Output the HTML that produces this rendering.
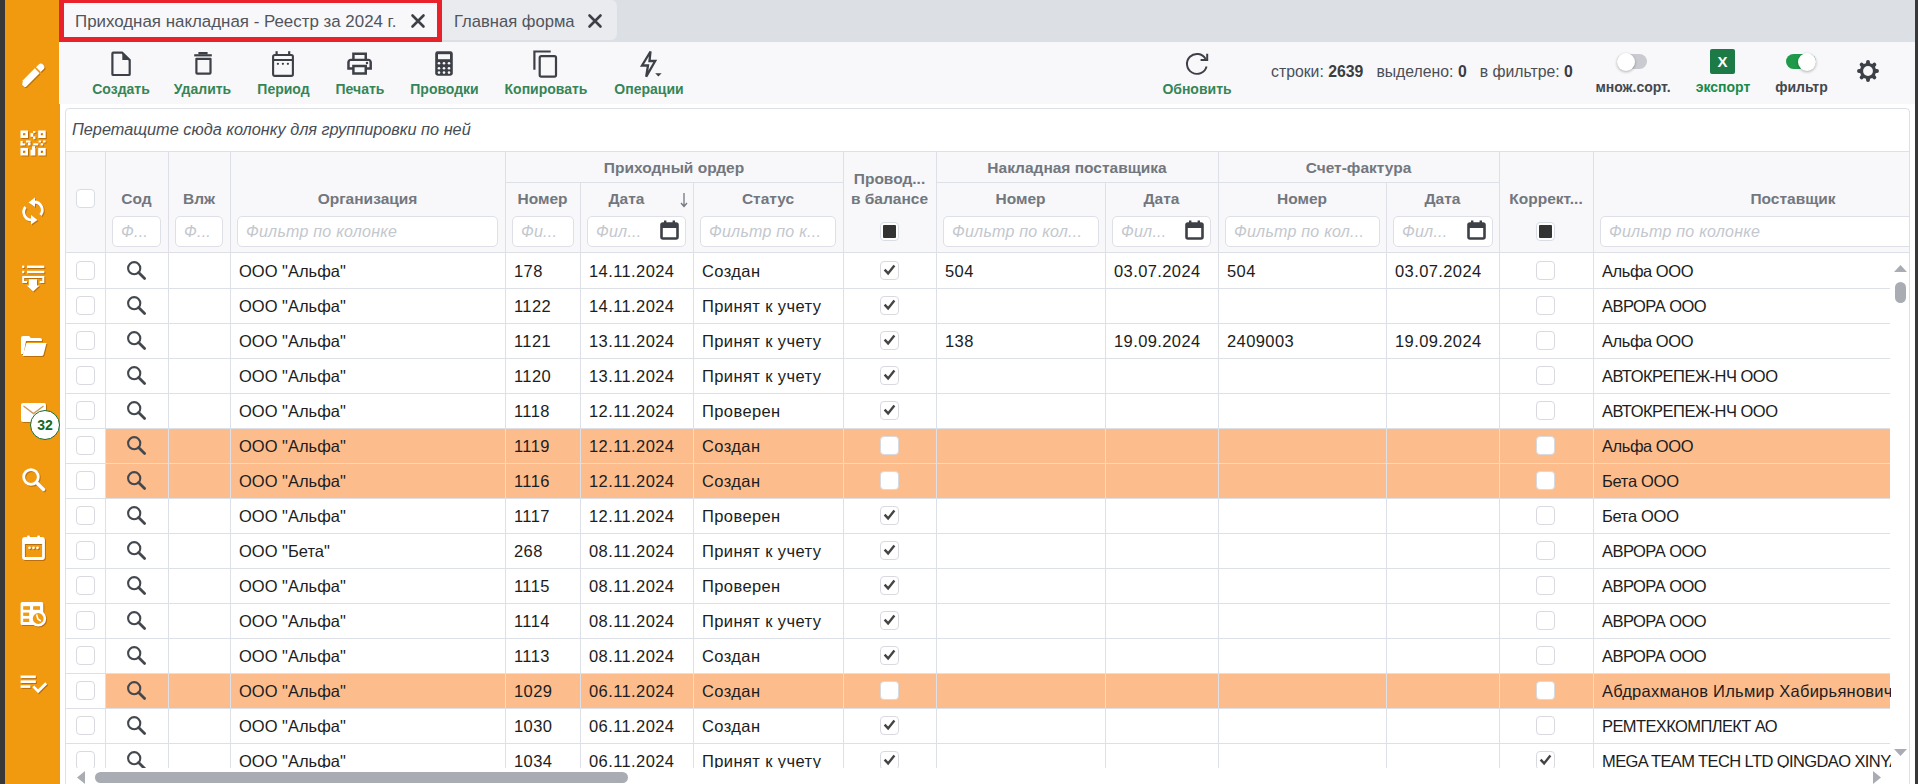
<!DOCTYPE html><html><head><meta charset="utf-8"><style>
html,body{margin:0;padding:0;width:1918px;height:784px;overflow:hidden;background:#fff;font-family:"Liberation Sans", sans-serif;}
div{box-sizing:border-box;}
.ic{position:absolute;overflow:visible;}
</style></head><body>
<div style="position:absolute;left:5px;top:0px;width:55px;height:784px;background:#f19a0f"></div>
<div style="position:absolute;left:59px;top:0px;width:1856px;height:42px;background:#dcdfe4"></div>
<div style="position:absolute;left:59px;top:42px;width:1856px;height:62px;background:#f8f8fa"></div>
<div style="position:absolute;left:59px;top:-2px;width:383px;height:44px;background:#f8f8fa;border:5px solid #e8212b"></div>
<div style="position:absolute;left:75px;top:1px;text-align:left;white-space:nowrap;font-size:16.9px;line-height:41px;color:#50555d">Приходная накладная - Реестр за 2024 г.</div>
<svg class="ic" style="left:410.5px;top:14px" width="14" height="14" viewBox="0 0 14 14"><path d="M1.5 1.5L12.5 12.5M12.5 1.5L1.5 12.5" stroke="#3d4047" stroke-width="2.6" stroke-linecap="round"/></svg>
<div style="position:absolute;left:442px;top:0px;width:175px;height:40px;background:#e9ebef;border-radius:0 6px 6px 0"></div>
<div style="position:absolute;left:454px;top:1px;text-align:left;white-space:nowrap;font-size:16.6px;line-height:41px;color:#50555d">Главная форма</div>
<svg class="ic" style="left:588px;top:14px" width="14" height="14" viewBox="0 0 14 14"><path d="M1.5 1.5L12.5 12.5M12.5 1.5L1.5 12.5" stroke="#3d4047" stroke-width="2.6" stroke-linecap="round"/></svg>
<svg class="ic" style="left:109px;top:50px" width="24" height="28" viewBox="0 0 24 28"><path d="M13.3 2.7H4.2Q3.4 2.7 3.4 3.7V24.2Q3.4 25 4.2 25H19.9Q20.7 25 20.7 24.2V10.1Z" fill="none" stroke="#3d4047" stroke-width="2.2" stroke-linejoin="round"/><path d="M13.3 2.2V10.1H21.2Z" fill="#3d4047"/></svg>
<div style="position:absolute;left:61px;top:79px;width:120px;text-align:center;white-space:nowrap;font-size:14px;font-weight:bold;line-height:20px;color:#358557">Создать</div>
<svg class="ic" style="left:192px;top:50px" width="22" height="28" viewBox="0 0 22 28"><path d="M2.2 5.3H19.8" stroke="#3d4047" stroke-width="2.2"/><path d="M7.2 4.3V2.9H14.8V4.3" fill="#3d4047" stroke="#3d4047" stroke-width="1.6"/><path d="M4.4 8.8V22.8Q4.4 23.7 5.3 23.7H17.6Q18.5 23.7 18.5 22.8V8.8Z" fill="none" stroke="#3d4047" stroke-width="2.2" stroke-linejoin="round"/></svg>
<div style="position:absolute;left:142.5px;top:79px;width:120px;text-align:center;white-space:nowrap;font-size:14px;font-weight:bold;line-height:20px;color:#358557">Удалить</div>
<svg class="ic" style="left:270px;top:50px" width="26" height="28" viewBox="0 0 26 28"><rect x="3.1" y="5" width="19.8" height="20.9" rx="1.6" fill="none" stroke="#3d4047" stroke-width="2.1"/><path d="M3.1 10H22.9" stroke="#3d4047" stroke-width="2"/><rect x="5.5" y="1.2" width="2.2" height="4" fill="#3d4047"/><rect x="18.1" y="1.2" width="2.2" height="4" fill="#3d4047"/><circle cx="7.9" cy="13.8" r="1.15" fill="#3d4047"/><circle cx="12.9" cy="13.8" r="1.15" fill="#3d4047"/><circle cx="17.9" cy="13.8" r="1.15" fill="#3d4047"/></svg>
<div style="position:absolute;left:223.5px;top:79px;width:120px;text-align:center;white-space:nowrap;font-size:14px;font-weight:bold;line-height:20px;color:#358557">Период</div>
<svg class="ic" style="left:346.3px;top:50.4px" width="28.4" height="28.4" viewBox="1 1 23 23"><path d="M19 8h-1V3H6v5H5c-1.66 0-3 1.34-3 3v6h4v4h12v-4h4v-6c0-1.66-1.34-3-3-3zM8 5h8v3H8V5zm8 12v2H8v-4h8v2zm2-2v-2H6v2H4v-4c0-.55.45-1 1-1h14c.55 0 1 .45 1 1v4h-2z" fill="#3d4047"/><circle cx="18" cy="11.5" r="1" fill="#3d4047"/></svg>
<div style="position:absolute;left:300px;top:79px;width:120px;text-align:center;white-space:nowrap;font-size:14px;font-weight:bold;line-height:20px;color:#358557">Печать</div>
<svg class="ic" style="left:434px;top:50px" width="20" height="27" viewBox="0 0 20 27"><rect x="1.2" y="1.3" width="17.6" height="24.4" rx="2.4" fill="#3d4047"/><rect x="4" y="4.2" width="12" height="5" fill="#f8f8fa"/><g fill="#f8f8fa"><circle cx="5" cy="13.2" r="1.3"/><circle cx="10" cy="13.2" r="1.3"/><circle cx="15" cy="13.2" r="1.3"/><circle cx="5" cy="18.2" r="1.3"/><circle cx="10" cy="18.2" r="1.3"/><circle cx="15" cy="18.2" r="1.3"/><circle cx="5" cy="22.6" r="1.3"/><circle cx="10" cy="22.6" r="1.3"/><circle cx="15" cy="22.6" r="1.3"/></g></svg>
<div style="position:absolute;left:384.5px;top:79px;width:120px;text-align:center;white-space:nowrap;font-size:14px;font-weight:bold;line-height:20px;color:#358557">Проводки</div>
<svg class="ic" style="left:532px;top:49px" width="28" height="30" viewBox="0 0 28 30"><path d="M2.4 20.8V2.5H18.7" fill="none" stroke="#3d4047" stroke-width="2.2"/><rect x="7.7" y="7.1" width="16.3" height="20.5" rx="1.6" fill="none" stroke="#3d4047" stroke-width="2.2"/></svg>
<div style="position:absolute;left:486px;top:79px;width:120px;text-align:center;white-space:nowrap;font-size:14px;font-weight:bold;line-height:20px;color:#358557">Копировать</div>
<svg class="ic" style="left:638px;top:49px" width="26" height="30" viewBox="0 0 26 30"><path d="M12.5 2.5L4 16.5H10L8.2 27.6L17.2 12H11.5Z" fill="none" stroke="#3d4047" stroke-width="2.3" stroke-linejoin="miter"/><path d="M17.2 24.2H23.6L20.4 27.4Z" fill="#3d4047"/></svg>
<div style="position:absolute;left:589px;top:79px;width:120px;text-align:center;white-space:nowrap;font-size:14px;font-weight:bold;line-height:20px;color:#358557">Операции</div>
<svg class="ic" style="left:1180px;top:48px" width="32" height="32" viewBox="0 0 32 32"><path d="M26.56 18.39A9.95 9.95 0 1 1 25.6 11.0" fill="none" stroke="#3d4047" stroke-width="1.95"/><path d="M27.2 5.8V12.1H20.6" fill="none" stroke="#3d4047" stroke-width="2"/></svg>
<div style="position:absolute;left:1137px;top:79px;width:120px;text-align:center;white-space:nowrap;font-size:14px;font-weight:bold;line-height:20px;color:#358557">Обновить</div>
<div style="position:absolute;left:1271px;top:62px;white-space:nowrap;font-size:15.8px;line-height:20px;color:#4a4f57">строки: <b style="color:#3a3d42">2639</b><span style="display:inline-block;width:13px"></span>выделено: <b style="color:#3a3d42">0</b><span style="display:inline-block;width:13px"></span>в фильтре: <b style="color:#3a3d42">0</b></div>
<div style="position:absolute;left:1617px;top:54px;width:30px;height:15px;background:#c9cbd0;border-radius:8px"></div>
<div style="position:absolute;left:1617px;top:53px;width:18px;height:18px;background:#fff;border-radius:50%;box-shadow:0 1px 3px rgba(0,0,0,0.3)"></div>
<div style="position:absolute;left:1573px;top:77px;width:120px;text-align:center;white-space:nowrap;font-size:14px;font-weight:bold;line-height:20px;color:#43484f">множ.сорт.</div>
<div style="position:absolute;left:1710px;top:49px;width:25px;height:25px;background:#1b7a45;border-radius:2px"></div>
<div style="position:absolute;left:1710px;top:49px;width:25px;text-align:center;white-space:nowrap;font-size:15px;font-weight:bold;line-height:25px;color:#fff">X</div>
<div style="position:absolute;left:1663px;top:77px;width:120px;text-align:center;white-space:nowrap;font-size:14px;font-weight:bold;line-height:20px;color:#1a8a4a">экспорт</div>
<div style="position:absolute;left:1786px;top:54px;width:30px;height:15px;background:#1f9a4b;border-radius:8px"></div>
<div style="position:absolute;left:1798px;top:53px;width:18px;height:18px;background:#fff;border-radius:50%;box-shadow:0 1px 3px rgba(0,0,0,0.3)"></div>
<div style="position:absolute;left:1741.5px;top:77px;width:120px;text-align:center;white-space:nowrap;font-size:14px;font-weight:bold;line-height:20px;color:#43484f">фильтр</div>
<svg class="ic" style="left:1853.9px;top:56.8px" width="28" height="28" viewBox="0 0 28 28"><path d="M14 14L23.00 14.00M14 14L20.36 20.36M14 14L14.00 23.00M14 14L7.64 20.36M14 14L5.00 14.00M14 14L7.64 7.64M14 14L14.00 5.00M14 14L20.36 7.64" stroke="#3d4047" stroke-width="3.9" stroke-linecap="round"/><circle cx="14" cy="14" r="8.1" fill="#3d4047"/><circle cx="14" cy="14" r="4.9" fill="#f8f8fa"/></svg>
<div style="position:absolute;left:65px;top:108px;width:1845px;height:686px;border:1px solid #dde0e6;border-radius:4px;background:#fff"></div>
<div style="position:absolute;left:72px;top:113px;text-align:left;white-space:nowrap;font-size:16.3px;font-style:italic;line-height:32px;color:#484d56">Перетащите сюда колонку для группировки по ней</div>
<div style="position:absolute;left:66px;top:151px;width:1843px;height:101px;#f8f8fa;background:#f8f8fa"></div>
<div style="position:absolute;left:65px;top:151px;width:1845px;height:1px;background:#dde0e6"></div>
<div style="position:absolute;left:65px;top:252px;width:1845px;height:1px;background:#dde0e6"></div>
<div style="position:absolute;left:105px;top:151px;width:1px;height:101px;background:#dde0e6"></div>
<div style="position:absolute;left:168px;top:151px;width:1px;height:101px;background:#dde0e6"></div>
<div style="position:absolute;left:230px;top:151px;width:1px;height:101px;background:#dde0e6"></div>
<div style="position:absolute;left:505px;top:151px;width:1px;height:101px;background:#dde0e6"></div>
<div style="position:absolute;left:843px;top:151px;width:1px;height:101px;background:#dde0e6"></div>
<div style="position:absolute;left:936px;top:151px;width:1px;height:101px;background:#dde0e6"></div>
<div style="position:absolute;left:1218px;top:151px;width:1px;height:101px;background:#dde0e6"></div>
<div style="position:absolute;left:1499px;top:151px;width:1px;height:101px;background:#dde0e6"></div>
<div style="position:absolute;left:1593px;top:151px;width:1px;height:101px;background:#dde0e6"></div>
<div style="position:absolute;left:580px;top:182px;width:1px;height:70px;background:#dde0e6"></div>
<div style="position:absolute;left:693px;top:182px;width:1px;height:70px;background:#dde0e6"></div>
<div style="position:absolute;left:1105px;top:182px;width:1px;height:70px;background:#dde0e6"></div>
<div style="position:absolute;left:1386px;top:182px;width:1px;height:70px;background:#dde0e6"></div>
<div style="position:absolute;left:505px;top:182px;width:338px;height:1px;background:#dde0e6"></div>
<div style="position:absolute;left:936px;top:182px;width:563px;height:1px;background:#dde0e6"></div>
<div style="position:absolute;left:505px;top:158px;width:338px;text-align:center;white-space:nowrap;font-size:15.5px;font-weight:bold;line-height:20px;color:#72777e">Приходный ордер</div>
<div style="position:absolute;left:936px;top:158px;width:282px;text-align:center;white-space:nowrap;font-size:15.5px;font-weight:bold;line-height:20px;color:#72777e">Накладная поставщика</div>
<div style="position:absolute;left:1218px;top:158px;width:281px;text-align:center;white-space:nowrap;font-size:15.5px;font-weight:bold;line-height:20px;color:#72777e">Счет-фактура</div>
<div style="position:absolute;left:105px;top:189px;width:63px;text-align:center;white-space:nowrap;font-size:15.5px;font-weight:bold;line-height:20px;color:#72777e">Сод</div>
<div style="position:absolute;left:168px;top:189px;width:62px;text-align:center;white-space:nowrap;font-size:15.5px;font-weight:bold;line-height:20px;color:#72777e">Влж</div>
<div style="position:absolute;left:230px;top:189px;width:275px;text-align:center;white-space:nowrap;font-size:15.5px;font-weight:bold;line-height:20px;color:#72777e">Организация</div>
<div style="position:absolute;left:505px;top:189px;width:75px;text-align:center;white-space:nowrap;font-size:15.5px;font-weight:bold;line-height:20px;color:#72777e">Номер</div>
<div style="position:absolute;left:580px;top:189px;width:93px;text-align:center;white-space:nowrap;font-size:15.5px;font-weight:bold;line-height:20px;color:#72777e">Дата</div>
<div style="position:absolute;left:693px;top:189px;width:150px;text-align:center;white-space:nowrap;font-size:15.5px;font-weight:bold;line-height:20px;color:#72777e">Статус</div>
<div style="position:absolute;left:936px;top:189px;width:169px;text-align:center;white-space:nowrap;font-size:15.5px;font-weight:bold;line-height:20px;color:#72777e">Номер</div>
<div style="position:absolute;left:1105px;top:189px;width:113px;text-align:center;white-space:nowrap;font-size:15.5px;font-weight:bold;line-height:20px;color:#72777e">Дата</div>
<div style="position:absolute;left:1218px;top:189px;width:168px;text-align:center;white-space:nowrap;font-size:15.5px;font-weight:bold;line-height:20px;color:#72777e">Номер</div>
<div style="position:absolute;left:1386px;top:189px;width:113px;text-align:center;white-space:nowrap;font-size:15.5px;font-weight:bold;line-height:20px;color:#72777e">Дата</div>
<div style="position:absolute;left:1499px;top:189px;width:94px;text-align:center;white-space:nowrap;font-size:15.5px;font-weight:bold;line-height:20px;color:#72777e">Коррект...</div>
<div style="position:absolute;left:1593px;top:189px;width:400px;text-align:center;white-space:nowrap;font-size:15.5px;font-weight:bold;line-height:20px;color:#72777e">Поставщик</div>
<div style="position:absolute;left:843px;top:169px;width:93px;text-align:center;white-space:nowrap;font-size:15.5px;font-weight:bold;line-height:20px;color:#72777e">Провод...</div>
<div style="position:absolute;left:843px;top:189px;width:93px;text-align:center;white-space:nowrap;font-size:15.5px;font-weight:bold;line-height:20px;color:#72777e">в балансе</div>
<svg class="ic" style="left:679px;top:192px" width="10" height="16" viewBox="0 0 10 16"><path d="M5 1V14M2 11L5 14.5L8 11" fill="none" stroke="#72777e" stroke-width="1.3"/></svg>
<div style="position:absolute;left:76px;top:189px;width:19px;height:19px;background:#fff;border:1px solid #d9dce2;border-radius:4px"></div>
<div style="position:absolute;left:112px;top:216px;width:49px;height:31px;background:#fff;border:1px solid #dde0e6;border-radius:5px"></div>
<div style="position:absolute;left:121px;top:216px;text-align:left;white-space:nowrap;font-size:16px;font-style:italic;line-height:31px;color:#c3c7ce;letter-spacing:0.25px">Ф...</div>
<div style="position:absolute;left:175px;top:216px;width:48px;height:31px;background:#fff;border:1px solid #dde0e6;border-radius:5px"></div>
<div style="position:absolute;left:184px;top:216px;text-align:left;white-space:nowrap;font-size:16px;font-style:italic;line-height:31px;color:#c3c7ce;letter-spacing:0.25px">Ф...</div>
<div style="position:absolute;left:237px;top:216px;width:261px;height:31px;background:#fff;border:1px solid #dde0e6;border-radius:5px"></div>
<div style="position:absolute;left:246px;top:216px;text-align:left;white-space:nowrap;font-size:16px;font-style:italic;line-height:31px;color:#c3c7ce;letter-spacing:0.25px">Фильтр по колонке</div>
<div style="position:absolute;left:512px;top:216px;width:62px;height:31px;background:#fff;border:1px solid #dde0e6;border-radius:5px"></div>
<div style="position:absolute;left:521px;top:216px;text-align:left;white-space:nowrap;font-size:16px;font-style:italic;line-height:31px;color:#c3c7ce;letter-spacing:0.25px">Фи...</div>
<div style="position:absolute;left:587px;top:216px;width:99px;height:31px;background:#fff;border:1px solid #dde0e6;border-radius:5px"></div>
<div style="position:absolute;left:596px;top:216px;text-align:left;white-space:nowrap;font-size:16px;font-style:italic;line-height:31px;color:#c3c7ce;letter-spacing:0.25px">Фил...</div>
<svg class="ic" style="left:660px;top:220px" width="19" height="20" viewBox="0 0 19 20"><rect x="1.5" y="3.5" width="16" height="15" rx="1.5" fill="none" stroke="#3d4047" stroke-width="2.6"/><rect x="1" y="3" width="17" height="5" fill="#3d4047"/><rect x="4" y="0.5" width="2.4" height="4" fill="#3d4047"/><rect x="12.6" y="0.5" width="2.4" height="4" fill="#3d4047"/></svg>
<div style="position:absolute;left:700px;top:216px;width:136px;height:31px;background:#fff;border:1px solid #dde0e6;border-radius:5px"></div>
<div style="position:absolute;left:709px;top:216px;text-align:left;white-space:nowrap;font-size:16px;font-style:italic;line-height:31px;color:#c3c7ce;letter-spacing:0.25px">Фильтр по к...</div>
<div style="position:absolute;left:943px;top:216px;width:156px;height:31px;background:#fff;border:1px solid #dde0e6;border-radius:5px"></div>
<div style="position:absolute;left:952px;top:216px;text-align:left;white-space:nowrap;font-size:16px;font-style:italic;line-height:31px;color:#c3c7ce;letter-spacing:0.25px">Фильтр по кол...</div>
<div style="position:absolute;left:1112px;top:216px;width:99px;height:31px;background:#fff;border:1px solid #dde0e6;border-radius:5px"></div>
<div style="position:absolute;left:1121px;top:216px;text-align:left;white-space:nowrap;font-size:16px;font-style:italic;line-height:31px;color:#c3c7ce;letter-spacing:0.25px">Фил...</div>
<svg class="ic" style="left:1185px;top:220px" width="19" height="20" viewBox="0 0 19 20"><rect x="1.5" y="3.5" width="16" height="15" rx="1.5" fill="none" stroke="#3d4047" stroke-width="2.6"/><rect x="1" y="3" width="17" height="5" fill="#3d4047"/><rect x="4" y="0.5" width="2.4" height="4" fill="#3d4047"/><rect x="12.6" y="0.5" width="2.4" height="4" fill="#3d4047"/></svg>
<div style="position:absolute;left:1225px;top:216px;width:155px;height:31px;background:#fff;border:1px solid #dde0e6;border-radius:5px"></div>
<div style="position:absolute;left:1234px;top:216px;text-align:left;white-space:nowrap;font-size:16px;font-style:italic;line-height:31px;color:#c3c7ce;letter-spacing:0.25px">Фильтр по кол...</div>
<div style="position:absolute;left:1393px;top:216px;width:100px;height:31px;background:#fff;border:1px solid #dde0e6;border-radius:5px"></div>
<div style="position:absolute;left:1402px;top:216px;text-align:left;white-space:nowrap;font-size:16px;font-style:italic;line-height:31px;color:#c3c7ce;letter-spacing:0.25px">Фил...</div>
<svg class="ic" style="left:1467px;top:220px" width="19" height="20" viewBox="0 0 19 20"><rect x="1.5" y="3.5" width="16" height="15" rx="1.5" fill="none" stroke="#3d4047" stroke-width="2.6"/><rect x="1" y="3" width="17" height="5" fill="#3d4047"/><rect x="4" y="0.5" width="2.4" height="4" fill="#3d4047"/><rect x="12.6" y="0.5" width="2.4" height="4" fill="#3d4047"/></svg>
<div style="position:absolute;left:1600px;top:216px;width:360px;height:31px;background:#fff;border:1px solid #dde0e6;border-radius:5px"></div>
<div style="position:absolute;left:1609px;top:216px;text-align:left;white-space:nowrap;font-size:16px;font-style:italic;line-height:31px;color:#c3c7ce;letter-spacing:0.25px">Фильтр по колонке</div>
<div style="position:absolute;left:880.0px;top:222px;width:19px;height:19px;background:#fff;border:1px solid #d9dce2;border-radius:4px"></div>
<div style="position:absolute;left:883.0px;top:225px;width:13px;height:13px;background:#333;border-radius:1px"></div>
<div style="position:absolute;left:1536.0px;top:222px;width:19px;height:19px;background:#fff;border:1px solid #d9dce2;border-radius:4px"></div>
<div style="position:absolute;left:1539.0px;top:225px;width:13px;height:13px;background:#333;border-radius:1px"></div>
<div style="position:absolute;left:1910px;top:108px;width:5px;height:676px;background:#fff"></div>
<div style="position:absolute;left:1909px;top:111px;width:1px;height:676px;background:#dde0e6"></div>
<div style="position:absolute;left:66px;top:253px;width:1825px;height:515px;overflow:hidden">
<div style="position:absolute;left:0px;top:35px;width:1824px;height:1px;background:#dde0e6"></div>
<div style="position:absolute;left:10px;top:8px;width:19px;height:19px;background:#fff;border:1px solid #d8dadf;border-radius:4px"></div>
<svg class="ic" style="left:60px;top:7px" width="22" height="22" viewBox="0 0 22 22"><circle cx="8.2" cy="8.2" r="6.1" fill="none" stroke="#43474e" stroke-width="2.1"/><path d="M12.6 12.6L18.6 18.6" stroke="#43474e" stroke-width="2.8" stroke-linecap="round"/></svg>
<div style="position:absolute;left:173px;top:1px;text-align:left;white-space:nowrap;font-size:16.5px;line-height:35px;color:#1b1d21;letter-spacing:0px">ООО "Альфа"</div>
<div style="position:absolute;left:448px;top:1px;text-align:left;white-space:nowrap;font-size:16.5px;line-height:35px;color:#1b1d21;letter-spacing:0.4px">178</div>
<div style="position:absolute;left:523px;top:1px;text-align:left;white-space:nowrap;font-size:16.5px;line-height:35px;color:#1b1d21;letter-spacing:0.4px">14.11.2024</div>
<div style="position:absolute;left:636px;top:1px;text-align:left;white-space:nowrap;font-size:16.5px;line-height:35px;color:#1b1d21;letter-spacing:0.4px">Создан</div>
<div style="position:absolute;left:879px;top:1px;text-align:left;white-space:nowrap;font-size:16.5px;line-height:35px;color:#1b1d21;letter-spacing:0.4px">504</div>
<div style="position:absolute;left:1048px;top:1px;text-align:left;white-space:nowrap;font-size:16.5px;line-height:35px;color:#1b1d21;letter-spacing:0.4px">03.07.2024</div>
<div style="position:absolute;left:1161px;top:1px;text-align:left;white-space:nowrap;font-size:16.5px;line-height:35px;color:#1b1d21;letter-spacing:0.4px">504</div>
<div style="position:absolute;left:1329px;top:1px;text-align:left;white-space:nowrap;font-size:16.5px;line-height:35px;color:#1b1d21;letter-spacing:0.4px">03.07.2024</div>
<div style="position:absolute;left:1536px;top:1px;text-align:left;white-space:nowrap;font-size:16.5px;line-height:35px;color:#1b1d21;letter-spacing:-0.45px">Альфа ООО</div>
<div style="position:absolute;left:814.0px;top:8px;width:19px;height:19px;background:#fff;border:1px solid #d8dadf;border-radius:4px"></div>
<svg class="ic" style="left:814.0px;top:8px" width="19" height="19" viewBox="0 0 19 19"><path d="M4.6 8.6L8.1 12.4L14.4 4.4" fill="none" stroke="#444" stroke-width="2.4" stroke-linejoin="miter"/></svg>
<div style="position:absolute;left:1470.0px;top:8px;width:19px;height:19px;background:#fff;border:1px solid #d8dadf;border-radius:4px"></div>
<div style="position:absolute;left:0px;top:70px;width:1824px;height:1px;background:#dde0e6"></div>
<div style="position:absolute;left:10px;top:43px;width:19px;height:19px;background:#fff;border:1px solid #d8dadf;border-radius:4px"></div>
<svg class="ic" style="left:60px;top:42px" width="22" height="22" viewBox="0 0 22 22"><circle cx="8.2" cy="8.2" r="6.1" fill="none" stroke="#43474e" stroke-width="2.1"/><path d="M12.6 12.6L18.6 18.6" stroke="#43474e" stroke-width="2.8" stroke-linecap="round"/></svg>
<div style="position:absolute;left:173px;top:36px;text-align:left;white-space:nowrap;font-size:16.5px;line-height:35px;color:#1b1d21;letter-spacing:0px">ООО "Альфа"</div>
<div style="position:absolute;left:448px;top:36px;text-align:left;white-space:nowrap;font-size:16.5px;line-height:35px;color:#1b1d21;letter-spacing:0.4px">1122</div>
<div style="position:absolute;left:523px;top:36px;text-align:left;white-space:nowrap;font-size:16.5px;line-height:35px;color:#1b1d21;letter-spacing:0.4px">14.11.2024</div>
<div style="position:absolute;left:636px;top:36px;text-align:left;white-space:nowrap;font-size:16.5px;line-height:35px;color:#1b1d21;letter-spacing:0.4px">Принят к учету</div>
<div style="position:absolute;left:1536px;top:36px;text-align:left;white-space:nowrap;font-size:16.5px;line-height:35px;color:#1b1d21;letter-spacing:-0.55px">АВРОРА ООО</div>
<div style="position:absolute;left:814.0px;top:43px;width:19px;height:19px;background:#fff;border:1px solid #d8dadf;border-radius:4px"></div>
<svg class="ic" style="left:814.0px;top:43px" width="19" height="19" viewBox="0 0 19 19"><path d="M4.6 8.6L8.1 12.4L14.4 4.4" fill="none" stroke="#444" stroke-width="2.4" stroke-linejoin="miter"/></svg>
<div style="position:absolute;left:1470.0px;top:43px;width:19px;height:19px;background:#fff;border:1px solid #d8dadf;border-radius:4px"></div>
<div style="position:absolute;left:0px;top:105px;width:1824px;height:1px;background:#dde0e6"></div>
<div style="position:absolute;left:10px;top:78px;width:19px;height:19px;background:#fff;border:1px solid #d8dadf;border-radius:4px"></div>
<svg class="ic" style="left:60px;top:77px" width="22" height="22" viewBox="0 0 22 22"><circle cx="8.2" cy="8.2" r="6.1" fill="none" stroke="#43474e" stroke-width="2.1"/><path d="M12.6 12.6L18.6 18.6" stroke="#43474e" stroke-width="2.8" stroke-linecap="round"/></svg>
<div style="position:absolute;left:173px;top:71px;text-align:left;white-space:nowrap;font-size:16.5px;line-height:35px;color:#1b1d21;letter-spacing:0px">ООО "Альфа"</div>
<div style="position:absolute;left:448px;top:71px;text-align:left;white-space:nowrap;font-size:16.5px;line-height:35px;color:#1b1d21;letter-spacing:0.4px">1121</div>
<div style="position:absolute;left:523px;top:71px;text-align:left;white-space:nowrap;font-size:16.5px;line-height:35px;color:#1b1d21;letter-spacing:0.4px">13.11.2024</div>
<div style="position:absolute;left:636px;top:71px;text-align:left;white-space:nowrap;font-size:16.5px;line-height:35px;color:#1b1d21;letter-spacing:0.4px">Принят к учету</div>
<div style="position:absolute;left:879px;top:71px;text-align:left;white-space:nowrap;font-size:16.5px;line-height:35px;color:#1b1d21;letter-spacing:0.4px">138</div>
<div style="position:absolute;left:1048px;top:71px;text-align:left;white-space:nowrap;font-size:16.5px;line-height:35px;color:#1b1d21;letter-spacing:0.4px">19.09.2024</div>
<div style="position:absolute;left:1161px;top:71px;text-align:left;white-space:nowrap;font-size:16.5px;line-height:35px;color:#1b1d21;letter-spacing:0.4px">2409003</div>
<div style="position:absolute;left:1329px;top:71px;text-align:left;white-space:nowrap;font-size:16.5px;line-height:35px;color:#1b1d21;letter-spacing:0.4px">19.09.2024</div>
<div style="position:absolute;left:1536px;top:71px;text-align:left;white-space:nowrap;font-size:16.5px;line-height:35px;color:#1b1d21;letter-spacing:-0.45px">Альфа ООО</div>
<div style="position:absolute;left:814.0px;top:78px;width:19px;height:19px;background:#fff;border:1px solid #d8dadf;border-radius:4px"></div>
<svg class="ic" style="left:814.0px;top:78px" width="19" height="19" viewBox="0 0 19 19"><path d="M4.6 8.6L8.1 12.4L14.4 4.4" fill="none" stroke="#444" stroke-width="2.4" stroke-linejoin="miter"/></svg>
<div style="position:absolute;left:1470.0px;top:78px;width:19px;height:19px;background:#fff;border:1px solid #d8dadf;border-radius:4px"></div>
<div style="position:absolute;left:0px;top:140px;width:1824px;height:1px;background:#dde0e6"></div>
<div style="position:absolute;left:10px;top:113px;width:19px;height:19px;background:#fff;border:1px solid #d8dadf;border-radius:4px"></div>
<svg class="ic" style="left:60px;top:112px" width="22" height="22" viewBox="0 0 22 22"><circle cx="8.2" cy="8.2" r="6.1" fill="none" stroke="#43474e" stroke-width="2.1"/><path d="M12.6 12.6L18.6 18.6" stroke="#43474e" stroke-width="2.8" stroke-linecap="round"/></svg>
<div style="position:absolute;left:173px;top:106px;text-align:left;white-space:nowrap;font-size:16.5px;line-height:35px;color:#1b1d21;letter-spacing:0px">ООО "Альфа"</div>
<div style="position:absolute;left:448px;top:106px;text-align:left;white-space:nowrap;font-size:16.5px;line-height:35px;color:#1b1d21;letter-spacing:0.4px">1120</div>
<div style="position:absolute;left:523px;top:106px;text-align:left;white-space:nowrap;font-size:16.5px;line-height:35px;color:#1b1d21;letter-spacing:0.4px">13.11.2024</div>
<div style="position:absolute;left:636px;top:106px;text-align:left;white-space:nowrap;font-size:16.5px;line-height:35px;color:#1b1d21;letter-spacing:0.4px">Принят к учету</div>
<div style="position:absolute;left:1536px;top:106px;text-align:left;white-space:nowrap;font-size:16.5px;line-height:35px;color:#1b1d21;letter-spacing:-0.52px">АВТОКРЕПЕЖ-НЧ ООО</div>
<div style="position:absolute;left:814.0px;top:113px;width:19px;height:19px;background:#fff;border:1px solid #d8dadf;border-radius:4px"></div>
<svg class="ic" style="left:814.0px;top:113px" width="19" height="19" viewBox="0 0 19 19"><path d="M4.6 8.6L8.1 12.4L14.4 4.4" fill="none" stroke="#444" stroke-width="2.4" stroke-linejoin="miter"/></svg>
<div style="position:absolute;left:1470.0px;top:113px;width:19px;height:19px;background:#fff;border:1px solid #d8dadf;border-radius:4px"></div>
<div style="position:absolute;left:0px;top:175px;width:1824px;height:1px;background:#dde0e6"></div>
<div style="position:absolute;left:10px;top:148px;width:19px;height:19px;background:#fff;border:1px solid #d8dadf;border-radius:4px"></div>
<svg class="ic" style="left:60px;top:147px" width="22" height="22" viewBox="0 0 22 22"><circle cx="8.2" cy="8.2" r="6.1" fill="none" stroke="#43474e" stroke-width="2.1"/><path d="M12.6 12.6L18.6 18.6" stroke="#43474e" stroke-width="2.8" stroke-linecap="round"/></svg>
<div style="position:absolute;left:173px;top:141px;text-align:left;white-space:nowrap;font-size:16.5px;line-height:35px;color:#1b1d21;letter-spacing:0px">ООО "Альфа"</div>
<div style="position:absolute;left:448px;top:141px;text-align:left;white-space:nowrap;font-size:16.5px;line-height:35px;color:#1b1d21;letter-spacing:0.4px">1118</div>
<div style="position:absolute;left:523px;top:141px;text-align:left;white-space:nowrap;font-size:16.5px;line-height:35px;color:#1b1d21;letter-spacing:0.4px">12.11.2024</div>
<div style="position:absolute;left:636px;top:141px;text-align:left;white-space:nowrap;font-size:16.5px;line-height:35px;color:#1b1d21;letter-spacing:0.4px">Проверен</div>
<div style="position:absolute;left:1536px;top:141px;text-align:left;white-space:nowrap;font-size:16.5px;line-height:35px;color:#1b1d21;letter-spacing:-0.52px">АВТОКРЕПЕЖ-НЧ ООО</div>
<div style="position:absolute;left:814.0px;top:148px;width:19px;height:19px;background:#fff;border:1px solid #d8dadf;border-radius:4px"></div>
<svg class="ic" style="left:814.0px;top:148px" width="19" height="19" viewBox="0 0 19 19"><path d="M4.6 8.6L8.1 12.4L14.4 4.4" fill="none" stroke="#444" stroke-width="2.4" stroke-linejoin="miter"/></svg>
<div style="position:absolute;left:1470.0px;top:148px;width:19px;height:19px;background:#fff;border:1px solid #d8dadf;border-radius:4px"></div>
<div style="position:absolute;left:39px;top:176px;width:1785px;height:34px;background:#fdbc8c"></div>
<div style="position:absolute;left:0px;top:210px;width:1824px;height:1px;background:#dde0e6"></div>
<div style="position:absolute;left:10px;top:183px;width:19px;height:19px;background:#fff;border:1px solid #d8dadf;border-radius:4px"></div>
<svg class="ic" style="left:60px;top:182px" width="22" height="22" viewBox="0 0 22 22"><circle cx="8.2" cy="8.2" r="6.1" fill="none" stroke="#43474e" stroke-width="2.1"/><path d="M12.6 12.6L18.6 18.6" stroke="#43474e" stroke-width="2.8" stroke-linecap="round"/></svg>
<div style="position:absolute;left:173px;top:176px;text-align:left;white-space:nowrap;font-size:16.5px;line-height:35px;color:#1b1d21;letter-spacing:0px">ООО "Альфа"</div>
<div style="position:absolute;left:448px;top:176px;text-align:left;white-space:nowrap;font-size:16.5px;line-height:35px;color:#1b1d21;letter-spacing:0.4px">1119</div>
<div style="position:absolute;left:523px;top:176px;text-align:left;white-space:nowrap;font-size:16.5px;line-height:35px;color:#1b1d21;letter-spacing:0.4px">12.11.2024</div>
<div style="position:absolute;left:636px;top:176px;text-align:left;white-space:nowrap;font-size:16.5px;line-height:35px;color:#1b1d21;letter-spacing:0.4px">Создан</div>
<div style="position:absolute;left:1536px;top:176px;text-align:left;white-space:nowrap;font-size:16.5px;line-height:35px;color:#1b1d21;letter-spacing:-0.45px">Альфа ООО</div>
<div style="position:absolute;left:814.0px;top:183px;width:19px;height:19px;background:#fff;border:1px solid #d8dadf;border-radius:4px"></div>
<div style="position:absolute;left:1470.0px;top:183px;width:19px;height:19px;background:#fff;border:1px solid #d8dadf;border-radius:4px"></div>
<div style="position:absolute;left:39px;top:211px;width:1785px;height:34px;background:#fdbc8c"></div>
<div style="position:absolute;left:0px;top:245px;width:1824px;height:1px;background:#dde0e6"></div>
<div style="position:absolute;left:10px;top:218px;width:19px;height:19px;background:#fff;border:1px solid #d8dadf;border-radius:4px"></div>
<svg class="ic" style="left:60px;top:217px" width="22" height="22" viewBox="0 0 22 22"><circle cx="8.2" cy="8.2" r="6.1" fill="none" stroke="#43474e" stroke-width="2.1"/><path d="M12.6 12.6L18.6 18.6" stroke="#43474e" stroke-width="2.8" stroke-linecap="round"/></svg>
<div style="position:absolute;left:173px;top:211px;text-align:left;white-space:nowrap;font-size:16.5px;line-height:35px;color:#1b1d21;letter-spacing:0px">ООО "Альфа"</div>
<div style="position:absolute;left:448px;top:211px;text-align:left;white-space:nowrap;font-size:16.5px;line-height:35px;color:#1b1d21;letter-spacing:0.4px">1116</div>
<div style="position:absolute;left:523px;top:211px;text-align:left;white-space:nowrap;font-size:16.5px;line-height:35px;color:#1b1d21;letter-spacing:0.4px">12.11.2024</div>
<div style="position:absolute;left:636px;top:211px;text-align:left;white-space:nowrap;font-size:16.5px;line-height:35px;color:#1b1d21;letter-spacing:0.4px">Создан</div>
<div style="position:absolute;left:1536px;top:211px;text-align:left;white-space:nowrap;font-size:16.5px;line-height:35px;color:#1b1d21;letter-spacing:-0.3px">Бета ООО</div>
<div style="position:absolute;left:814.0px;top:218px;width:19px;height:19px;background:#fff;border:1px solid #d8dadf;border-radius:4px"></div>
<div style="position:absolute;left:1470.0px;top:218px;width:19px;height:19px;background:#fff;border:1px solid #d8dadf;border-radius:4px"></div>
<div style="position:absolute;left:0px;top:280px;width:1824px;height:1px;background:#dde0e6"></div>
<div style="position:absolute;left:10px;top:253px;width:19px;height:19px;background:#fff;border:1px solid #d8dadf;border-radius:4px"></div>
<svg class="ic" style="left:60px;top:252px" width="22" height="22" viewBox="0 0 22 22"><circle cx="8.2" cy="8.2" r="6.1" fill="none" stroke="#43474e" stroke-width="2.1"/><path d="M12.6 12.6L18.6 18.6" stroke="#43474e" stroke-width="2.8" stroke-linecap="round"/></svg>
<div style="position:absolute;left:173px;top:246px;text-align:left;white-space:nowrap;font-size:16.5px;line-height:35px;color:#1b1d21;letter-spacing:0px">ООО "Альфа"</div>
<div style="position:absolute;left:448px;top:246px;text-align:left;white-space:nowrap;font-size:16.5px;line-height:35px;color:#1b1d21;letter-spacing:0.4px">1117</div>
<div style="position:absolute;left:523px;top:246px;text-align:left;white-space:nowrap;font-size:16.5px;line-height:35px;color:#1b1d21;letter-spacing:0.4px">12.11.2024</div>
<div style="position:absolute;left:636px;top:246px;text-align:left;white-space:nowrap;font-size:16.5px;line-height:35px;color:#1b1d21;letter-spacing:0.4px">Проверен</div>
<div style="position:absolute;left:1536px;top:246px;text-align:left;white-space:nowrap;font-size:16.5px;line-height:35px;color:#1b1d21;letter-spacing:-0.3px">Бета ООО</div>
<div style="position:absolute;left:814.0px;top:253px;width:19px;height:19px;background:#fff;border:1px solid #d8dadf;border-radius:4px"></div>
<svg class="ic" style="left:814.0px;top:253px" width="19" height="19" viewBox="0 0 19 19"><path d="M4.6 8.6L8.1 12.4L14.4 4.4" fill="none" stroke="#444" stroke-width="2.4" stroke-linejoin="miter"/></svg>
<div style="position:absolute;left:1470.0px;top:253px;width:19px;height:19px;background:#fff;border:1px solid #d8dadf;border-radius:4px"></div>
<div style="position:absolute;left:0px;top:315px;width:1824px;height:1px;background:#dde0e6"></div>
<div style="position:absolute;left:10px;top:288px;width:19px;height:19px;background:#fff;border:1px solid #d8dadf;border-radius:4px"></div>
<svg class="ic" style="left:60px;top:287px" width="22" height="22" viewBox="0 0 22 22"><circle cx="8.2" cy="8.2" r="6.1" fill="none" stroke="#43474e" stroke-width="2.1"/><path d="M12.6 12.6L18.6 18.6" stroke="#43474e" stroke-width="2.8" stroke-linecap="round"/></svg>
<div style="position:absolute;left:173px;top:281px;text-align:left;white-space:nowrap;font-size:16.5px;line-height:35px;color:#1b1d21;letter-spacing:0px">ООО "Бета"</div>
<div style="position:absolute;left:448px;top:281px;text-align:left;white-space:nowrap;font-size:16.5px;line-height:35px;color:#1b1d21;letter-spacing:0.4px">268</div>
<div style="position:absolute;left:523px;top:281px;text-align:left;white-space:nowrap;font-size:16.5px;line-height:35px;color:#1b1d21;letter-spacing:0.4px">08.11.2024</div>
<div style="position:absolute;left:636px;top:281px;text-align:left;white-space:nowrap;font-size:16.5px;line-height:35px;color:#1b1d21;letter-spacing:0.4px">Принят к учету</div>
<div style="position:absolute;left:1536px;top:281px;text-align:left;white-space:nowrap;font-size:16.5px;line-height:35px;color:#1b1d21;letter-spacing:-0.55px">АВРОРА ООО</div>
<div style="position:absolute;left:814.0px;top:288px;width:19px;height:19px;background:#fff;border:1px solid #d8dadf;border-radius:4px"></div>
<svg class="ic" style="left:814.0px;top:288px" width="19" height="19" viewBox="0 0 19 19"><path d="M4.6 8.6L8.1 12.4L14.4 4.4" fill="none" stroke="#444" stroke-width="2.4" stroke-linejoin="miter"/></svg>
<div style="position:absolute;left:1470.0px;top:288px;width:19px;height:19px;background:#fff;border:1px solid #d8dadf;border-radius:4px"></div>
<div style="position:absolute;left:0px;top:350px;width:1824px;height:1px;background:#dde0e6"></div>
<div style="position:absolute;left:10px;top:323px;width:19px;height:19px;background:#fff;border:1px solid #d8dadf;border-radius:4px"></div>
<svg class="ic" style="left:60px;top:322px" width="22" height="22" viewBox="0 0 22 22"><circle cx="8.2" cy="8.2" r="6.1" fill="none" stroke="#43474e" stroke-width="2.1"/><path d="M12.6 12.6L18.6 18.6" stroke="#43474e" stroke-width="2.8" stroke-linecap="round"/></svg>
<div style="position:absolute;left:173px;top:316px;text-align:left;white-space:nowrap;font-size:16.5px;line-height:35px;color:#1b1d21;letter-spacing:0px">ООО "Альфа"</div>
<div style="position:absolute;left:448px;top:316px;text-align:left;white-space:nowrap;font-size:16.5px;line-height:35px;color:#1b1d21;letter-spacing:0.4px">1115</div>
<div style="position:absolute;left:523px;top:316px;text-align:left;white-space:nowrap;font-size:16.5px;line-height:35px;color:#1b1d21;letter-spacing:0.4px">08.11.2024</div>
<div style="position:absolute;left:636px;top:316px;text-align:left;white-space:nowrap;font-size:16.5px;line-height:35px;color:#1b1d21;letter-spacing:0.4px">Проверен</div>
<div style="position:absolute;left:1536px;top:316px;text-align:left;white-space:nowrap;font-size:16.5px;line-height:35px;color:#1b1d21;letter-spacing:-0.55px">АВРОРА ООО</div>
<div style="position:absolute;left:814.0px;top:323px;width:19px;height:19px;background:#fff;border:1px solid #d8dadf;border-radius:4px"></div>
<svg class="ic" style="left:814.0px;top:323px" width="19" height="19" viewBox="0 0 19 19"><path d="M4.6 8.6L8.1 12.4L14.4 4.4" fill="none" stroke="#444" stroke-width="2.4" stroke-linejoin="miter"/></svg>
<div style="position:absolute;left:1470.0px;top:323px;width:19px;height:19px;background:#fff;border:1px solid #d8dadf;border-radius:4px"></div>
<div style="position:absolute;left:0px;top:385px;width:1824px;height:1px;background:#dde0e6"></div>
<div style="position:absolute;left:10px;top:358px;width:19px;height:19px;background:#fff;border:1px solid #d8dadf;border-radius:4px"></div>
<svg class="ic" style="left:60px;top:357px" width="22" height="22" viewBox="0 0 22 22"><circle cx="8.2" cy="8.2" r="6.1" fill="none" stroke="#43474e" stroke-width="2.1"/><path d="M12.6 12.6L18.6 18.6" stroke="#43474e" stroke-width="2.8" stroke-linecap="round"/></svg>
<div style="position:absolute;left:173px;top:351px;text-align:left;white-space:nowrap;font-size:16.5px;line-height:35px;color:#1b1d21;letter-spacing:0px">ООО "Альфа"</div>
<div style="position:absolute;left:448px;top:351px;text-align:left;white-space:nowrap;font-size:16.5px;line-height:35px;color:#1b1d21;letter-spacing:0.4px">1114</div>
<div style="position:absolute;left:523px;top:351px;text-align:left;white-space:nowrap;font-size:16.5px;line-height:35px;color:#1b1d21;letter-spacing:0.4px">08.11.2024</div>
<div style="position:absolute;left:636px;top:351px;text-align:left;white-space:nowrap;font-size:16.5px;line-height:35px;color:#1b1d21;letter-spacing:0.4px">Принят к учету</div>
<div style="position:absolute;left:1536px;top:351px;text-align:left;white-space:nowrap;font-size:16.5px;line-height:35px;color:#1b1d21;letter-spacing:-0.55px">АВРОРА ООО</div>
<div style="position:absolute;left:814.0px;top:358px;width:19px;height:19px;background:#fff;border:1px solid #d8dadf;border-radius:4px"></div>
<svg class="ic" style="left:814.0px;top:358px" width="19" height="19" viewBox="0 0 19 19"><path d="M4.6 8.6L8.1 12.4L14.4 4.4" fill="none" stroke="#444" stroke-width="2.4" stroke-linejoin="miter"/></svg>
<div style="position:absolute;left:1470.0px;top:358px;width:19px;height:19px;background:#fff;border:1px solid #d8dadf;border-radius:4px"></div>
<div style="position:absolute;left:0px;top:420px;width:1824px;height:1px;background:#dde0e6"></div>
<div style="position:absolute;left:10px;top:393px;width:19px;height:19px;background:#fff;border:1px solid #d8dadf;border-radius:4px"></div>
<svg class="ic" style="left:60px;top:392px" width="22" height="22" viewBox="0 0 22 22"><circle cx="8.2" cy="8.2" r="6.1" fill="none" stroke="#43474e" stroke-width="2.1"/><path d="M12.6 12.6L18.6 18.6" stroke="#43474e" stroke-width="2.8" stroke-linecap="round"/></svg>
<div style="position:absolute;left:173px;top:386px;text-align:left;white-space:nowrap;font-size:16.5px;line-height:35px;color:#1b1d21;letter-spacing:0px">ООО "Альфа"</div>
<div style="position:absolute;left:448px;top:386px;text-align:left;white-space:nowrap;font-size:16.5px;line-height:35px;color:#1b1d21;letter-spacing:0.4px">1113</div>
<div style="position:absolute;left:523px;top:386px;text-align:left;white-space:nowrap;font-size:16.5px;line-height:35px;color:#1b1d21;letter-spacing:0.4px">08.11.2024</div>
<div style="position:absolute;left:636px;top:386px;text-align:left;white-space:nowrap;font-size:16.5px;line-height:35px;color:#1b1d21;letter-spacing:0.4px">Создан</div>
<div style="position:absolute;left:1536px;top:386px;text-align:left;white-space:nowrap;font-size:16.5px;line-height:35px;color:#1b1d21;letter-spacing:-0.55px">АВРОРА ООО</div>
<div style="position:absolute;left:814.0px;top:393px;width:19px;height:19px;background:#fff;border:1px solid #d8dadf;border-radius:4px"></div>
<svg class="ic" style="left:814.0px;top:393px" width="19" height="19" viewBox="0 0 19 19"><path d="M4.6 8.6L8.1 12.4L14.4 4.4" fill="none" stroke="#444" stroke-width="2.4" stroke-linejoin="miter"/></svg>
<div style="position:absolute;left:1470.0px;top:393px;width:19px;height:19px;background:#fff;border:1px solid #d8dadf;border-radius:4px"></div>
<div style="position:absolute;left:39px;top:421px;width:1785px;height:34px;background:#fdbc8c"></div>
<div style="position:absolute;left:0px;top:455px;width:1824px;height:1px;background:#dde0e6"></div>
<div style="position:absolute;left:10px;top:428px;width:19px;height:19px;background:#fff;border:1px solid #d8dadf;border-radius:4px"></div>
<svg class="ic" style="left:60px;top:427px" width="22" height="22" viewBox="0 0 22 22"><circle cx="8.2" cy="8.2" r="6.1" fill="none" stroke="#43474e" stroke-width="2.1"/><path d="M12.6 12.6L18.6 18.6" stroke="#43474e" stroke-width="2.8" stroke-linecap="round"/></svg>
<div style="position:absolute;left:173px;top:421px;text-align:left;white-space:nowrap;font-size:16.5px;line-height:35px;color:#1b1d21;letter-spacing:0px">ООО "Альфа"</div>
<div style="position:absolute;left:448px;top:421px;text-align:left;white-space:nowrap;font-size:16.5px;line-height:35px;color:#1b1d21;letter-spacing:0.4px">1029</div>
<div style="position:absolute;left:523px;top:421px;text-align:left;white-space:nowrap;font-size:16.5px;line-height:35px;color:#1b1d21;letter-spacing:0.4px">06.11.2024</div>
<div style="position:absolute;left:636px;top:421px;text-align:left;white-space:nowrap;font-size:16.5px;line-height:35px;color:#1b1d21;letter-spacing:0.4px">Создан</div>
<div style="position:absolute;left:1536px;top:421px;text-align:left;white-space:nowrap;font-size:16.5px;line-height:35px;color:#1b1d21;letter-spacing:0.25px">Абдрахманов Ильмир Хабирьянович</div>
<div style="position:absolute;left:814.0px;top:428px;width:19px;height:19px;background:#fff;border:1px solid #d8dadf;border-radius:4px"></div>
<div style="position:absolute;left:1470.0px;top:428px;width:19px;height:19px;background:#fff;border:1px solid #d8dadf;border-radius:4px"></div>
<div style="position:absolute;left:0px;top:490px;width:1824px;height:1px;background:#dde0e6"></div>
<div style="position:absolute;left:10px;top:463px;width:19px;height:19px;background:#fff;border:1px solid #d8dadf;border-radius:4px"></div>
<svg class="ic" style="left:60px;top:462px" width="22" height="22" viewBox="0 0 22 22"><circle cx="8.2" cy="8.2" r="6.1" fill="none" stroke="#43474e" stroke-width="2.1"/><path d="M12.6 12.6L18.6 18.6" stroke="#43474e" stroke-width="2.8" stroke-linecap="round"/></svg>
<div style="position:absolute;left:173px;top:456px;text-align:left;white-space:nowrap;font-size:16.5px;line-height:35px;color:#1b1d21;letter-spacing:0px">ООО "Альфа"</div>
<div style="position:absolute;left:448px;top:456px;text-align:left;white-space:nowrap;font-size:16.5px;line-height:35px;color:#1b1d21;letter-spacing:0.4px">1030</div>
<div style="position:absolute;left:523px;top:456px;text-align:left;white-space:nowrap;font-size:16.5px;line-height:35px;color:#1b1d21;letter-spacing:0.4px">06.11.2024</div>
<div style="position:absolute;left:636px;top:456px;text-align:left;white-space:nowrap;font-size:16.5px;line-height:35px;color:#1b1d21;letter-spacing:0.4px">Создан</div>
<div style="position:absolute;left:1536px;top:456px;text-align:left;white-space:nowrap;font-size:16.5px;line-height:35px;color:#1b1d21;letter-spacing:-0.6px">РЕМТЕХКОМПЛЕКТ АО</div>
<div style="position:absolute;left:814.0px;top:463px;width:19px;height:19px;background:#fff;border:1px solid #d8dadf;border-radius:4px"></div>
<svg class="ic" style="left:814.0px;top:463px" width="19" height="19" viewBox="0 0 19 19"><path d="M4.6 8.6L8.1 12.4L14.4 4.4" fill="none" stroke="#444" stroke-width="2.4" stroke-linejoin="miter"/></svg>
<div style="position:absolute;left:1470.0px;top:463px;width:19px;height:19px;background:#fff;border:1px solid #d8dadf;border-radius:4px"></div>
<div style="position:absolute;left:0px;top:525px;width:1824px;height:1px;background:#dde0e6"></div>
<div style="position:absolute;left:10px;top:498px;width:19px;height:19px;background:#fff;border:1px solid #d8dadf;border-radius:4px"></div>
<svg class="ic" style="left:60px;top:497px" width="22" height="22" viewBox="0 0 22 22"><circle cx="8.2" cy="8.2" r="6.1" fill="none" stroke="#43474e" stroke-width="2.1"/><path d="M12.6 12.6L18.6 18.6" stroke="#43474e" stroke-width="2.8" stroke-linecap="round"/></svg>
<div style="position:absolute;left:173px;top:491px;text-align:left;white-space:nowrap;font-size:16.5px;line-height:35px;color:#1b1d21;letter-spacing:0px">ООО "Альфа"</div>
<div style="position:absolute;left:448px;top:491px;text-align:left;white-space:nowrap;font-size:16.5px;line-height:35px;color:#1b1d21;letter-spacing:0.4px">1034</div>
<div style="position:absolute;left:523px;top:491px;text-align:left;white-space:nowrap;font-size:16.5px;line-height:35px;color:#1b1d21;letter-spacing:0.4px">06.11.2024</div>
<div style="position:absolute;left:636px;top:491px;text-align:left;white-space:nowrap;font-size:16.5px;line-height:35px;color:#1b1d21;letter-spacing:0.4px">Принят к учету</div>
<div style="position:absolute;left:1536px;top:491px;text-align:left;white-space:nowrap;font-size:16.5px;line-height:35px;color:#1b1d21;letter-spacing:-0.6px">MEGA TEAM TECH LTD QINGDAO XINYANG</div>
<div style="position:absolute;left:814.0px;top:498px;width:19px;height:19px;background:#fff;border:1px solid #d8dadf;border-radius:4px"></div>
<svg class="ic" style="left:814.0px;top:498px" width="19" height="19" viewBox="0 0 19 19"><path d="M4.6 8.6L8.1 12.4L14.4 4.4" fill="none" stroke="#444" stroke-width="2.4" stroke-linejoin="miter"/></svg>
<div style="position:absolute;left:1470.0px;top:498px;width:19px;height:19px;background:#fff;border:1px solid #d8dadf;border-radius:4px"></div>
<svg class="ic" style="left:1470.0px;top:498px" width="19" height="19" viewBox="0 0 19 19"><path d="M4.6 8.6L8.1 12.4L14.4 4.4" fill="none" stroke="#444" stroke-width="2.4" stroke-linejoin="miter"/></svg>
<div style="position:absolute;left:39px;top:0px;width:1px;height:515px;background:#dde0e6"></div>
<div style="position:absolute;left:102px;top:0px;width:1px;height:515px;background:#dde0e6"></div>
<div style="position:absolute;left:164px;top:0px;width:1px;height:515px;background:#dde0e6"></div>
<div style="position:absolute;left:439px;top:0px;width:1px;height:515px;background:#dde0e6"></div>
<div style="position:absolute;left:514px;top:0px;width:1px;height:515px;background:#dde0e6"></div>
<div style="position:absolute;left:627px;top:0px;width:1px;height:515px;background:#dde0e6"></div>
<div style="position:absolute;left:777px;top:0px;width:1px;height:515px;background:#dde0e6"></div>
<div style="position:absolute;left:870px;top:0px;width:1px;height:515px;background:#dde0e6"></div>
<div style="position:absolute;left:1039px;top:0px;width:1px;height:515px;background:#dde0e6"></div>
<div style="position:absolute;left:1152px;top:0px;width:1px;height:515px;background:#dde0e6"></div>
<div style="position:absolute;left:1320px;top:0px;width:1px;height:515px;background:#dde0e6"></div>
<div style="position:absolute;left:1433px;top:0px;width:1px;height:515px;background:#dde0e6"></div>
<div style="position:absolute;left:1527px;top:0px;width:1px;height:515px;background:#dde0e6"></div>
</div>
<svg class="ic" style="left:1893px;top:263px" width="15" height="10" viewBox="0 0 15 10"><path d="M1 9H14L7.5 2Z" fill="#a9acb3"/></svg>
<div style="position:absolute;left:1895px;top:282px;width:11px;height:21px;background:#a9acb3;border-radius:6px"></div>
<svg class="ic" style="left:1893px;top:748px" width="15" height="10" viewBox="0 0 15 10"><path d="M1 1H14L7.5 8Z" fill="#a9acb3"/></svg>
<svg class="ic" style="left:76px;top:770px" width="10" height="15" viewBox="0 0 10 15"><path d="M9 1V14L1 7.5Z" fill="#a9acb3"/></svg>
<div style="position:absolute;left:95px;top:772px;width:533px;height:11px;background:#a9acb3;border-radius:6px"></div>
<svg class="ic" style="left:1872px;top:770px" width="10" height="15" viewBox="0 0 10 15"><path d="M1 1V14L9 7.5Z" fill="#a9acb3"/></svg>
<svg class="ic" style="left:18px;top:60px;filter:drop-shadow(1px 1px 0.6px rgba(120,60,0,0.45))" width="30" height="30" viewBox="0 0 30 30"><g transform="rotate(-45 15 15)"><path d="M0.5 17.4V14.2L4.2 11.6H21V18.4H1.5Z" fill="#ffffff"/><path d="M22.6 11.6H26.5Q29.5 11.6 29.5 15Q29.5 18.4 26.5 18.4H22.6Z" fill="#ffffff"/></g></svg>
<svg class="ic" style="left:17px;top:127px;filter:drop-shadow(1px 1px 0.6px rgba(120,60,0,0.45))" width="32" height="32" viewBox="0 0 32 32"><path d="M3.5 3.5h7.5v7.5h-7.5Z M6.15 6.15v2.2h2.2v-2.2Z" fill="#ffffff" fill-rule="evenodd"/><path d="M21.2 3.5h7.5v7.5h-7.5Z M23.849999999999998 6.15v2.2h2.2v-2.2Z" fill="#ffffff" fill-rule="evenodd"/><path d="M3.5 21.1h7.5v7.5h-7.5Z M6.15 23.75v2.2h2.2v-2.2Z" fill="#ffffff" fill-rule="evenodd"/><path d="M21.2 21.1h7.5v7.5h-7.5Z M23.849999999999998 23.75v2.2h2.2v-2.2Z" fill="#ffffff" fill-rule="evenodd"/><rect x="16.1" y="4.1" width="2.3" height="1.8" fill="#ffffff"/><rect x="13.5" y="6.1" width="2.8" height="3.7" fill="#ffffff"/><rect x="16.1" y="9.4" width="2.3" height="2.8" fill="#ffffff"/><rect x="3.5" y="13.9" width="2.2" height="4.5" fill="#ffffff"/><rect x="3.5" y="16.4" width="4.7" height="2.0" fill="#ffffff"/><rect x="9" y="13.5" width="4.5" height="2" fill="#ffffff"/><rect x="11" y="15.5" width="2.5" height="2.9" fill="#ffffff"/><rect x="16.3" y="16.3" width="4.9" height="2.1" fill="#ffffff"/><rect x="21.6" y="13.5" width="2.5" height="2" fill="#ffffff"/><rect x="23.7" y="16.3" width="2.4" height="2.1" fill="#ffffff"/><rect x="26.1" y="13.5" width="2.5" height="2" fill="#ffffff"/><rect x="15.1" y="19.2" width="2.9" height="2.2" fill="#ffffff"/><path d="M15.1 21.1H18.4V28.6H13.5V22.7H15.1Z" fill="#ffffff"/></svg>
<svg class="ic" style="left:22px;top:196px;filter:drop-shadow(1px 1px 0.6px rgba(120,60,0,0.45))" width="22" height="30" viewBox="0 0 22 30"><path d="M18.5 19A8 8 0 0 0 12 6" fill="none" stroke="#ffffff" stroke-width="2.8"/><path d="M13 1.5L6.5 6.5L13 11Z" fill="#ffffff"/><path d="M3.5 11A8 8 0 0 0 10 24" fill="none" stroke="#ffffff" stroke-width="2.8"/><path d="M9 19L15.5 24L9 28.5Z" fill="#ffffff"/></svg>
<svg class="ic" style="left:15px;top:255px;filter:drop-shadow(1px 1px 0.6px rgba(120,60,0,0.45))" width="37" height="45" viewBox="0 0 37 45"><g fill="#ffffff"><rect x="7.2" y="10.6" width="2.1" height="2.4"/><rect x="12" y="10.6" width="17.3" height="2.4"/><rect x="7.2" y="15.8" width="2.1" height="2.4"/><rect x="12" y="15.8" width="17.3" height="2.4"/><path d="M7.2 20.9H29.3V28.1H24.7V26.1H27.3V23H9.2V26.1H12V28.1H7.2Z"/><path d="M13.9 24.2H22V30.6H24.6L18.2 36.6L11.8 30.6H13.9Z"/></g></svg>
<svg class="ic" style="left:20px;top:335px;filter:drop-shadow(1px 1px 0.6px rgba(120,60,0,0.45))" width="28" height="23" viewBox="0 0 28 23"><path d="M1 3Q1 1 3 1H9L11 3H20Q22 3 22 5V6H6L3.5 19H1Z" fill="#ffffff"/><path d="M6.5 8H26.5L23.5 19.5Q23 21 21.5 21H2.5Z" fill="#ffffff"/></svg>
<svg class="ic" style="left:20px;top:402px;filter:drop-shadow(1px 1px 0.6px rgba(120,60,0,0.45))" width="27" height="22" viewBox="0 0 27 22"><rect x="1" y="1" width="25" height="19" rx="2" fill="#ffffff"/><path d="M3.5 4L13.5 11.5L23.5 4" fill="none" stroke="#d09a55" stroke-width="1.4"/></svg>
<div style="position:absolute;left:30px;top:410px;width:30px;height:30px;background:#fff;border:1.6px solid #156b2c;border-radius:50%"></div>
<div style="position:absolute;left:30px;top:410px;width:30px;text-align:center;white-space:nowrap;font-size:14px;font-weight:bold;line-height:30px;color:#0f6b2a">32</div>
<svg class="ic" style="left:21px;top:467px;filter:drop-shadow(1px 1px 0.6px rgba(120,60,0,0.45))" width="26" height="26" viewBox="0 0 26 26"><circle cx="10" cy="10" r="7.3" fill="none" stroke="#ffffff" stroke-width="2.8"/><path d="M15.5 15.5L22.5 22.5" stroke="#ffffff" stroke-width="3.4" stroke-linecap="round"/></svg>
<svg class="ic" style="left:21px;top:534px;filter:drop-shadow(1px 1px 0.6px rgba(120,60,0,0.45))" width="25" height="28" viewBox="0 0 25 28"><rect x="2.5" y="4.5" width="20" height="20" rx="1.5" fill="none" stroke="#ffffff" stroke-width="2.8"/><rect x="2" y="4" width="21" height="6" fill="#ffffff"/><rect x="6" y="1.5" width="2.8" height="4" rx="1" fill="#ffffff"/><rect x="16.2" y="1.5" width="2.8" height="4" rx="1" fill="#ffffff"/><circle cx="8.5" cy="13.8" r="1.4" fill="#ffffff"/><circle cx="12.5" cy="13.8" r="1.4" fill="#ffffff"/><circle cx="16.5" cy="13.8" r="1.4" fill="#ffffff"/></svg>
<svg class="ic" style="left:15px;top:595px;filter:drop-shadow(1px 1px 0.6px rgba(120,60,0,0.45))" width="37" height="40" viewBox="0 0 37 40"><rect x="5.6" y="7.1" width="22.7" height="23" rx="1.6" fill="#ffffff"/><g fill="#f19a0f"><rect x="8.2" y="11.2" width="6.8" height="3.6"/><rect x="18.1" y="11.2" width="6.9" height="3.6"/><rect x="8.2" y="17.6" width="6" height="3.3"/><rect x="8.2" y="23.7" width="6" height="3.3"/></g><circle cx="23.2" cy="23.5" r="6.7" fill="#f19a0f" stroke="#ffffff" stroke-width="2.6"/><path d="M21.6 19.6L22.9 23.9L25.8 26" fill="none" stroke="#ffffff" stroke-width="1.6"/></svg>
<svg class="ic" style="left:20px;top:675px;filter:drop-shadow(1px 1px 0.6px rgba(120,60,0,0.45))" width="28" height="20" viewBox="0 0 28 20"><rect x="0.6" y="0.5" width="15.2" height="2.6" fill="#ffffff"/><rect x="0.6" y="5.4" width="15.2" height="2.6" fill="#ffffff"/><rect x="0.6" y="10.3" width="9.8" height="2.6" fill="#ffffff"/><path d="M13.3 11.4L18.1 16.3L26.2 8.2" fill="none" stroke="#ffffff" stroke-width="2.7"/></svg>
<div style="position:absolute;left:0px;top:0px;width:5px;height:784px;background:#383838"></div>
<div style="position:absolute;left:1915px;top:0px;width:3px;height:784px;background:#383838"></div>
</body></html>
